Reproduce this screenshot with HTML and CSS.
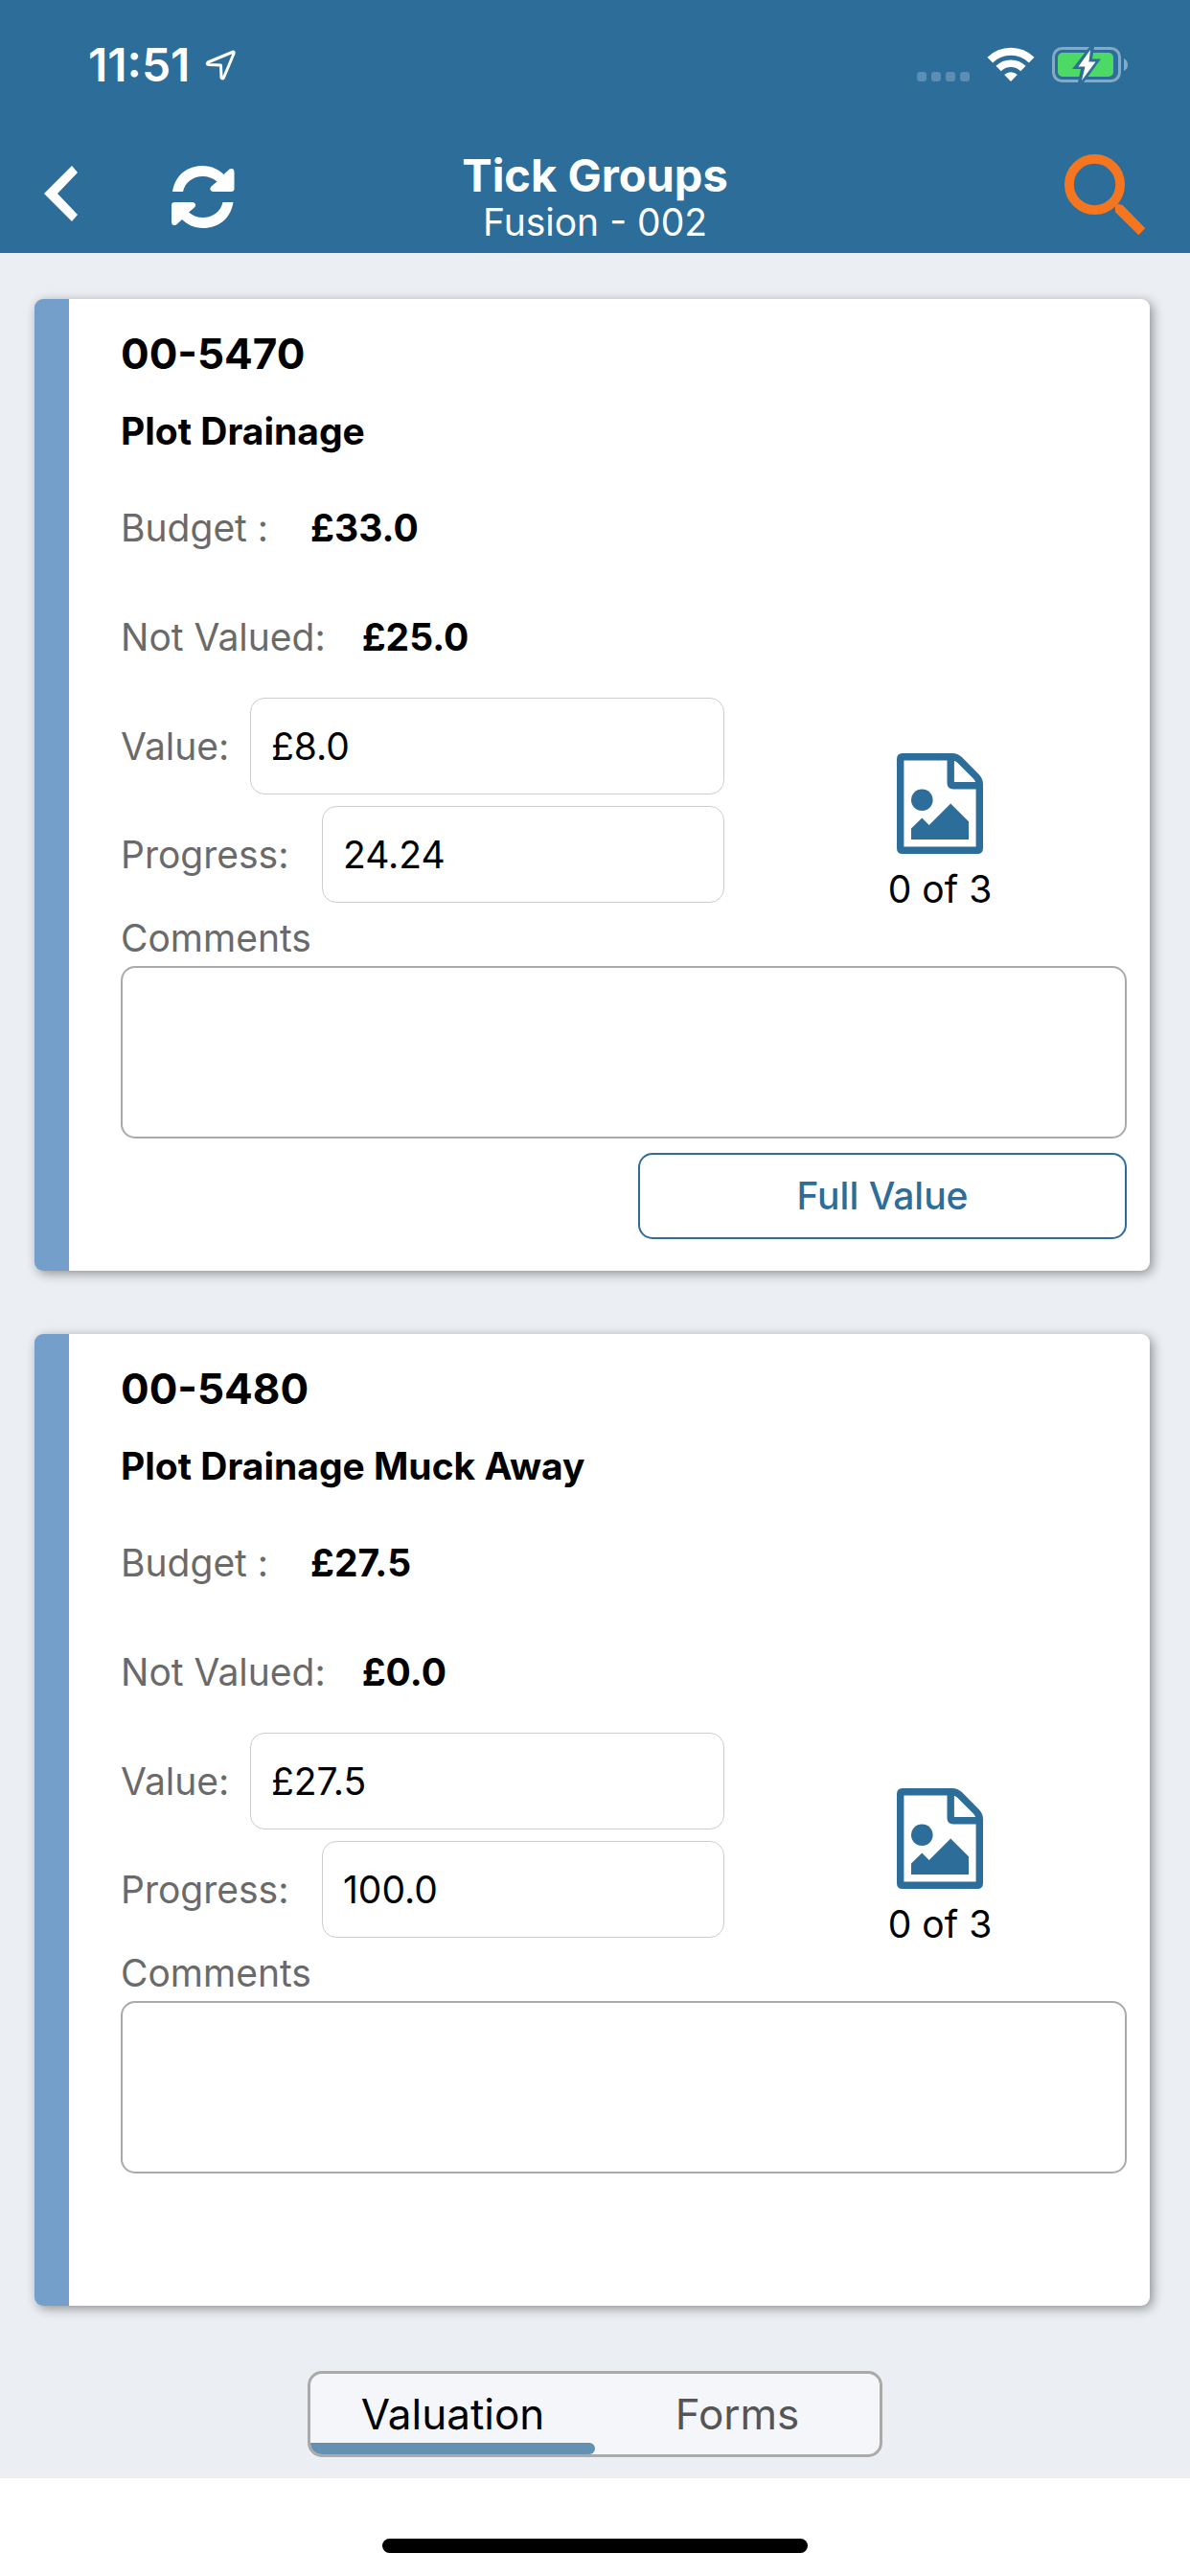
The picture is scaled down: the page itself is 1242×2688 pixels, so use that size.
FILE: index.html
```html
<!DOCTYPE html>
<html lang="en">
<head>
<meta charset="utf-8">
<meta name="viewport" content="width=device-width, initial-scale=1">
<title>Tick Groups</title>
<link rel="stylesheet" href="styles.css">
</head>
<body>
<header class="top">
  <div class="status">
    <div class="status-left">
      <span class="time">11:51</span>
      <svg class="location" width="32" height="32" viewBox="0 0 32 32" aria-hidden="true"><path d="M29.500 2 L3 13 Q1 15 4 15.500 L16.500 16 L17 29 Q18 31 19.500 29 L30 4 Q30.500 2 29.500 2 Z" fill="none" stroke="#fff" stroke-width="3" stroke-linejoin="round"/></svg>
    </div>
    <div class="status-right">
      <svg width="55" height="36" viewBox="0 0 55 36" aria-hidden="true"><g fill="#5c8db2"><rect y="26" width="10" height="10" rx="3"/><rect x="15" y="26" width="10" height="10" rx="3"/><rect x="30" y="26" width="10" height="10" rx="3"/><rect x="45" y="26" width="10" height="10" rx="3"/></g></svg>
      <svg width="50" height="36" viewBox="0 0 50 36" aria-hidden="true"><g fill="none" stroke="#fff"><path d="M3.300 13.700 A31 31 0 0 1 46.700 13.700" stroke-width="8"/><path d="M12.100 22.500 A18.200 18.200 0 0 1 37.900 22.500" stroke-width="7.500"/></g><path d="M25 36 L18.200 29 A9.500 9.500 0 0 1 31.800 29 Z" fill="#fff"/></svg>
      <svg width="80" height="38" viewBox="0 0 80 38" aria-hidden="true"><rect x="1.500" y="1.500" width="69" height="34" rx="9" fill="none" stroke="#86a9c6" stroke-width="3"/><path d="M75 12 Q79 14 79 18.500 Q79 23 75 25 Z" fill="#86a9c6"/><rect x="6" y="6" width="58" height="25" rx="5" fill="#4cd964"/><path d="M39 0 L21 23 L30 23 L27 37 L33 37 L51 12.500 L42 12.500 L44 0 Z" fill="#2c6d9a"/><path d="M40 3 L27.500 20.500 L34.500 20.500 L31 35 L45.500 15.500 L38.500 15.500 Z" fill="#fff"/></svg>
    </div>
  </div>
  <nav class="bar">
    <div class="bar-left">
      <button class="icon-button" type="button" aria-label="Back"><svg width="36" height="58" viewBox="0 0 36 58"><path d="M29 0 L35 7 L14 29 L35 51 L29 58 L0 29 Z" fill="#fff"/></svg></button>
      <button class="icon-button" type="button" aria-label="Refresh"><svg width="66" height="66" viewBox="0 0 66 66"><g id="half" fill="#fff"><path d="M1 27 C4 9 17 0 32.500 0 C42 0 49.500 4 54.500 9 L60.500 3.500 Q65.500 1.500 65.500 7 L65.500 24 Q65.500 27 62 27 L43 27 Q38.500 25 41.500 21.500 L47.500 16.500 Q41 11 32.500 11 C23 11 14 17 12 27 Z"/></g><use href="#half" transform="rotate(180 32.750 32.500)"/></svg></button>
    </div>
    <div class="heading">
      <h1>Tick Groups</h1>
      <p>Fusion - 002</p>
    </div>
    <div class="bar-right">
      <button class="icon-button" type="button" aria-label="Search"><svg width="85" height="85" viewBox="0 0 85 85"><circle cx="31.500" cy="31.500" r="26.600" fill="none" stroke="#f5761f" stroke-width="9.800"/><path d="M51 56 L55.700 51.700 L60.700 53 L84.300 77.300 L77.300 84.300 L53 60.300 L53 55 Z" fill="#f5761f"/></svg></button>
    </div>
  </nav>
</header>

<main class="list">
  <article class="card">
    <h2>00-5470</h2>
    <h3>Plot Drainage</h3>
    <p class="fact fact-budget">Budget : <strong>£33.0</strong></p>
    <p class="fact">Not Valued: <strong>£25.0</strong></p>
    <div class="entry">
      <div class="fields">
        <div class="field"><label for="value-1">Value:</label><input id="value-1" type="text" value="£8.0"></div>
        <div class="field field-wide"><label for="progress-1">Progress:</label><input id="progress-1" type="text" value="24.24"></div>
      </div>
      <button class="photos" type="button">
        <svg width="90" height="105" viewBox="0 0 90 105" aria-hidden="true"><path d="M6 3.700 H58 Q62 3.700 65 6.500 L83 24.500 Q86.300 28 86.300 32 V99 Q86.300 101.300 84 101.300 H6 Q3.700 101.300 3.700 99 V6 Q3.700 3.700 6 3.700 Z M56.200 4 V31 Q56.200 33.700 59 33.700 H86" fill="none" stroke="#2c6d9a" stroke-width="7.400"/><circle cx="26.300" cy="48.700" r="11.300" fill="#2c6d9a"/><path d="M15 90 V78.500 L26.300 67.500 L33.700 75 L56.200 52.500 L75 71.300 V90 Z" fill="#2c6d9a"/></svg>
        <span>0 of 3</span>
      </button>
    </div>
    <label class="comments-label" for="comments-1">Comments</label>
    <textarea id="comments-1"></textarea>
    <div class="actions"><button class="full-value" type="button">Full Value</button></div>
  </article>

  <article class="card">
    <h2>00-5480</h2>
    <h3>Plot Drainage Muck Away</h3>
    <p class="fact fact-budget">Budget : <strong>£27.5</strong></p>
    <p class="fact">Not Valued: <strong>£0.0</strong></p>
    <div class="entry">
      <div class="fields">
        <div class="field"><label for="value-2">Value:</label><input id="value-2" type="text" value="£27.5"></div>
        <div class="field field-wide"><label for="progress-2">Progress:</label><input id="progress-2" type="text" value="100.0"></div>
      </div>
      <button class="photos" type="button">
        <svg width="90" height="105" viewBox="0 0 90 105" aria-hidden="true"><path d="M6 3.700 H58 Q62 3.700 65 6.500 L83 24.500 Q86.300 28 86.300 32 V99 Q86.300 101.300 84 101.300 H6 Q3.700 101.300 3.700 99 V6 Q3.700 3.700 6 3.700 Z M56.200 4 V31 Q56.200 33.700 59 33.700 H86" fill="none" stroke="#2c6d9a" stroke-width="7.400"/><circle cx="26.300" cy="48.700" r="11.300" fill="#2c6d9a"/><path d="M15 90 V78.500 L26.300 67.500 L33.700 75 L56.200 52.500 L75 71.300 V90 Z" fill="#2c6d9a"/></svg>
        <span>0 of 3</span>
      </button>
    </div>
    <label class="comments-label" for="comments-2">Comments</label>
    <textarea id="comments-2"></textarea>
    <div class="actions"></div>
  </article>

  <div class="tabs" role="tablist">
    <button class="tab tab-active" type="button" role="tab" aria-selected="true">Valuation</button>
    <button class="tab" type="button" role="tab" aria-selected="false">Forms</button>
  </div>
</main>
<footer class="home"><div class="home-bar"></div></footer>
</body>
</html>
```
FILE: styles.css
```css
* { box-sizing: border-box; }
body {
  margin: 0;
  min-height: 100vh;
  display: flex;
  flex-direction: column;
  background: #fff;
  color: #000;
  font: 400 39px/46px Inter, "Liberation Sans", sans-serif;
}
h1, h2, h3, p { margin: 0; }
button, input, textarea { font: inherit; color: inherit; }
button { background: none; border: 0; padding: 0; cursor: pointer; }
svg { display: block; }

.top { background: #2c6d9a; color: #fff; }
.status {
  display: flex;
  justify-content: space-between;
  align-items: flex-start;
  height: 136px;
  padding: 40px 64px 0 92px;
}
.status-left, .status-right { display: flex; }
.status-left { gap: 16px; }
.status-right { gap: 18px; padding-top: 9px; }
.time { font-size: 48px; font-weight: 600; line-height: 56px; }
.location { margin-top: 12px; }
.bar {
  display: grid;
  grid-template-columns: 1fr auto 1fr;
  height: 128px;
  padding: 19px 46px 0;
}
.bar-left { display: flex; align-items: flex-start; gap: 97px; padding-top: 18px; }
.bar-right { display: flex; justify-content: flex-end; align-items: flex-start; padding-top: 6px; }
.heading { text-align: center; }
.heading h1 { font-size: 47px; font-weight: 700; line-height: 56px; }
.heading p { line-height: 42px; }

.list {
  display: flex;
  flex-direction: column;
  padding: 48px 0 22px;
  background: #ebeff3;
}
.card {
  margin: 0 42px 66px 36px;
  padding: 30px 24px 33px 54px;
  background: #fff;
  border-left: 36px solid #759fcb;
  border-radius: 9px;
  box-shadow: 3px 3px 12px rgba(0, 0, 0, 0.4);
}
.card h2 { font-size: 44px; font-weight: 700; line-height: 54px; }
.card h3 { margin-top: 31px; font-size: 39px; font-weight: 700; line-height: 46px; }
.fact { display: flex; color: #6a6a6a; gap: 38px; margin-top: 68px; }
.fact-budget { margin-top: 55px; gap: 44px; }
.fact strong { color: #000; font-weight: 700; }
.entry { display: flex; margin-top: 40px; }
.fields { width: 60%; display: flex; flex-direction: column; gap: 12px; }
.field { display: grid; grid-template-columns: 135px 1fr; align-items: center; color: #6a6a6a; }
.field-wide { grid-template-columns: 210px 1fr; }
.field input {
  width: 100%;
  height: 101px;
  padding: 0 21px;
  border: 1px solid #ccc;
  border-radius: 15px;
  background: #fff;
  color: #000;
}
.photos {
  flex: 1;
  display: flex;
  flex-direction: column;
  align-items: center;
  gap: 14px;
  padding: 58px 0 0 30px;
}
.comments-label { display: block; margin-top: 5px; color: #6a6a6a; }
textarea {
  display: block;
  width: 100%;
  height: 180px;
  margin-top: 6px;
  padding: 15px 21px;
  border: 2px solid #aaa;
  border-radius: 15px;
  resize: none;
}
.actions { display: flex; justify-content: flex-end; height: 90px; margin-top: 15px; }
.full-value {
  width: 510px;
  border: 2px solid #2c6d9a;
  border-radius: 15px;
  color: #2c6d9a;
  font-weight: 500;
}
.tabs {
  align-self: center;
  display: flex;
  width: 600px;
  height: 90px;
  margin-top: 2px;
  border: 3px solid #aaa;
  border-radius: 15px;
  overflow: hidden;
  background: #f5f6fa;
}
.tab { position: relative; flex: 1; color: #555; font-size: 44px; }
.tab-active { color: #000; }
.tab-active::after {
  content: "";
  position: absolute;
  right: 0;
  bottom: 0;
  left: 0;
  height: 12px;
  border-radius: 0 6px 6px 0;
  background: #6291b1;
}
.home { flex: 1; display: flex; justify-content: center; align-items: flex-end; padding: 63px 0 24px; }
.home-bar { width: 444px; height: 15px; border-radius: 8px; background: #000; }
```
